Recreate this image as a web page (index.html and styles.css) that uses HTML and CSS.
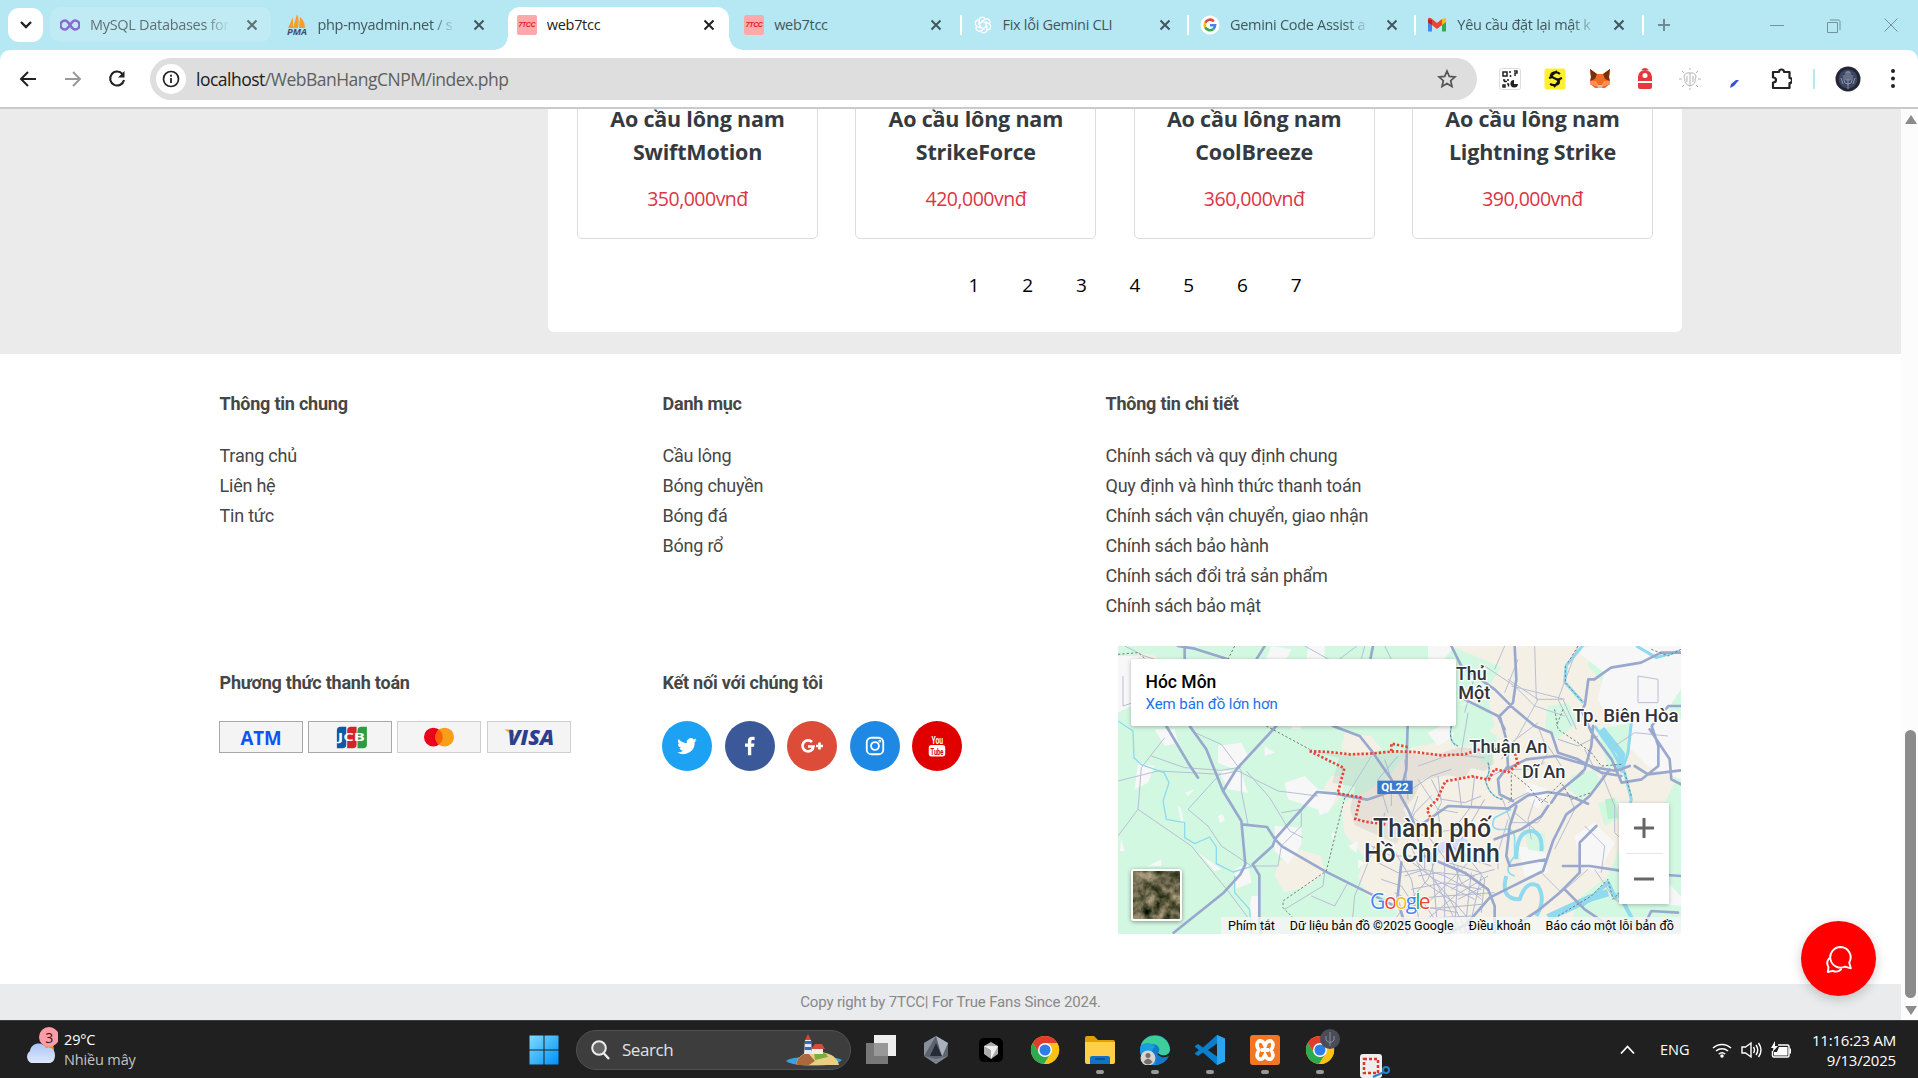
FILE: index.html
```html
<!DOCTYPE html>
<html lang="vi">
<head>
<meta charset="utf-8">
<title>web7tcc</title>
<link rel="stylesheet" href="styles.css">
</head>
<body>
<svg class="defs" width="0" height="0">
  <symbol id="x" viewBox="0 0 12 12"><path d="M1.5 1.5l9 9M10.5 1.5l-9 9" fill="none" stroke="currentColor" stroke-width="2"/></symbol>
  <symbol id="chrome" viewBox="0 0 32 32"><circle cx="16" cy="16" r="15" fill="#fbc116"/><path d="M3 8.5A15 15 0 0 1 29 8.5H16L10 19.500z" fill="#e33b2e"/><path d="M3 8.500A15 15 0 0 0 15 31l7-11.500-12 0z" fill="#2da94f"/><path d="M16 8.500H29A15 15 0 0 1 15 31l7.500-11.500z" fill="#fbc116"/><circle cx="16" cy="16" r="7.500" fill="#fff"/><circle cx="16" cy="16" r="5.900" fill="#2f7de9"/></symbol>
</svg>

<header class="browser">
  <div class="tabstrip">
    <button class="tab-search"><svg width="14" height="10" viewBox="0 0 14 10"><path d="M2 2l5 5 5-5" fill="none" stroke="#222" stroke-width="2.4"/></svg></button>
    <div class="tabs">
      <div class="tab hover"><span class="fav"><svg width="20" height="14" viewBox="0 0 20 14"><path d="M10 7C8 4 6.500 2.500 5 2.500a4.500 4.500 0 0 0 0 9C6.500 11.500 8 10 10 7s3.500-4.500 5-4.500a4.500 4.500 0 0 1 0 9C13.500 11.500 12 10 10 7z" fill="none" stroke="#7650c8" stroke-width="2.600"/></svg></span><span class="label fade">MySQL Databases for</span><svg class="close"><use href="#x"/></svg></div>
      <div class="tab"><span class="fav"><svg width="22" height="22" viewBox="0 0 22 22"><path d="M7 3v11H2zM11 0c2 4 2 10 1 14H7zM14 3c4 3 5 8 5 11h-6z" fill="#f89c2e"/><text x="1" y="21" font-size="8" font-weight="700" font-style="italic" textLength="20" lengthAdjust="spacingAndGlyphs" fill="#4a4a7c">PMA</text></svg></span><span class="label fade">php-myadmin.net / s</span><svg class="close"><use href="#x"/></svg></div>
      <div class="tab active"><span class="fav tcc">7TCC</span><span class="label">web7tcc</span><svg class="close"><use href="#x"/></svg></div>
      <div class="tab"><span class="fav tcc">7TCC</span><span class="label">web7tcc</span><svg class="close"><use href="#x"/></svg></div>
      <div class="tab sep"><span class="fav"><svg width="18" height="18" viewBox="0 0 18 18" fill="none" stroke="#fff" stroke-width="1.300"><g id="petal"><path d="M9 5.500L5 7.800V4.500a3.300 3.300 0 0 1 6-2"/></g><use href="#petal" transform="rotate(60 9 9)"/><use href="#petal" transform="rotate(120 9 9)"/><use href="#petal" transform="rotate(180 9 9)"/><use href="#petal" transform="rotate(240 9 9)"/><use href="#petal" transform="rotate(300 9 9)"/></svg></span><span class="label">Fix lỗi Gemini CLI</span><svg class="close"><use href="#x"/></svg></div>
      <div class="tab sep"><span class="fav"><svg width="20" height="20" viewBox="0 0 20 20"><circle cx="10" cy="10" r="9.500" fill="#fff"/><g fill="none" stroke-width="2.600"><path d="M13.800 6.300A5.200 5.200 0 0 0 5.300 7.700" stroke="#ea4335"/><path d="M5.300 7.700a5.200 5.200 0 0 0 0 4.700" stroke="#fbbc05"/><path d="M5.300 12.400a5.200 5.200 0 0 0 8 1.600" stroke="#34a853"/><path d="M13.300 14a5.200 5.200 0 0 0 1.800-3.700H10" stroke="#4285f4"/></g></svg></span><span class="label fade">Gemini Code Assist a</span><svg class="close"><use href="#x"/></svg></div>
      <div class="tab sep"><span class="fav"><svg width="20" height="16" viewBox="0 0 20 16"><path d="M1 3v11.500h4V6z" fill="#4285f4"/><path d="M19 3v11.500h-4V6z" fill="#34a853"/><path d="M15 2l4-1v4l-4 3z" fill="#fbbc04"/><path d="M1 5V2.500C1 .5 3 .5 4.500 1.500L10 6l5-4v6l-5 4z" fill="#ea4335"/><path d="M1 2.500v3L5 8V3z" fill="#c5221f"/></svg></span><span class="label fade">Yêu cầu đặt lại mật k</span><svg class="close"><use href="#x"/></svg></div>
      <div class="newtab sep"><svg width="14" height="14" viewBox="0 0 14 14"><path d="M7 1v12M1 7h12" stroke="#6f8b94" stroke-width="2"/></svg></div>
    </div>
    <div class="winctl">
      <svg width="14" height="16" viewBox="0 0 14 16"><path d="M0 7.500h14" stroke="#74929b" stroke-width="1"/></svg>
      <svg width="14" height="16" viewBox="0 0 14 16"><path d="M.5 4.500h10v10h-10zM3 2h8.500a1.500 1.500 0 0 1 1.500 1.500V12" fill="none" stroke="#74929b"/></svg>
      <svg width="14" height="14" viewBox="0 0 14 14"><path d="M.5.5l13 13M13.500.5l-13 13" stroke="#74929b"/></svg>
    </div>
  </div>
  <div class="toolbar">
    <div class="nav">
      <svg width="20" height="20" viewBox="0 0 20 20"><path d="M18 10H3M10 3l-7 7 7 7" fill="none" stroke="#222" stroke-width="2"/></svg>
      <svg width="20" height="20" viewBox="0 0 20 20"><path d="M2 10h15M10 3l7 7-7 7" fill="none" stroke="#9a9a9a" stroke-width="2"/></svg>
      <svg width="20" height="20" viewBox="0 0 20 20"><path d="M15.500 5A7 7 0 1 0 17 11" fill="none" stroke="#222" stroke-width="2.100"/><path d="M17.500 2v6.500H11z" fill="#222"/></svg>
    </div>
    <div class="omnibox">
      <span class="info"><svg width="18" height="18" viewBox="0 0 18 18"><circle cx="9" cy="9" r="7.500" fill="none" stroke="#222" stroke-width="1.700"/><path d="M9 8v5M9 4.800v2" stroke="#222" stroke-width="1.800"/></svg></span>
      <span class="url"><b>localhost</b>/WebBanHangCNPM/index.php</span>
      <svg width="20" height="20" viewBox="0 0 20 20"><path d="M10 2l2.300 5.400 5.700.5-4.300 3.800 1.300 5.700-5-3-5 3 1.300-5.700L2 7.900l5.700-.5z" fill="none" stroke="#555" stroke-width="1.700"/></svg>
    </div>
    <div class="exts">
      <svg viewBox="0 0 22 22"><rect x=".5" y=".5" width="21" height="21" rx="2" fill="#fff" stroke="#ddd"/><path d="M4 4h4v4H4zM11 3v2M15 3h3v2h-2v3M11.500 7v2M4 12h1.500v1.500H8M9 11v2M4 17h2v2H4zM8 16h1.500v2.500" fill="none" stroke="#222" stroke-width="1.500"/><path d="M15 12a3.800 3.800 0 1 0 4 4h-4z" fill="#222"/></svg>
      <svg viewBox="0 0 22 22"><rect x=".5" y=".5" width="21" height="21" rx="2.500" fill="#ffef2e"/><path d="M16 6c-3-3-8-2-9 1 0 4 8 3 8 7 0 3-5 4-9 2M13 3L7 8l8 5-5 6M5 10l4-1M13 12l5-2" fill="none" stroke="#111" stroke-width="2"/></svg>
      <svg viewBox="0 0 22 22"><path d="M1 1l7 5h6l7-5-1 9 1 6-5 4H6l-5-4 1-6z" fill="#ef6c23"/><path d="M1 1l7 5-2 5-5 2 1-4zM21 1l-7 5 2 5 5 2-1-4z" fill="#7c2d0c"/><path d="M1 13l6 0 3 5H6l-5-2zM21 13l-6 0-3 5h4l5-2z" fill="#ff8d5d"/><path d="M8 17h6l-1 3H9z" fill="#c9c1bb"/></svg>
      <svg viewBox="0 0 22 22"><path d="M4 13V9a7 7 0 0 1 14 0v4zM4 15h14v4q0 2-2 2H6q-2 0-2-2zM7 2q4-4 8 0z" fill="#e8383d"/><circle cx="11" cy="7.500" r="2.500" fill="#fff"/></svg>
      <svg viewBox="0 0 22 22" fill="none" stroke="#b3b3b3"><path d="M11 5v13M11 5C5 4 4 9 6 11c-1 4 2 6 5 7M11 5c6-1 7 4 5 6 1 4-2 6-5 7M8 8v6M14 8v6M11 0v2M11 20v2M0 11h3M19 11h3M3 3l2 2M17 17l2 2M19 3l-2 2M3 19l2-2"/></svg>
      <svg viewBox="0 0 22 22"><path d="M6 20l1-4 5-4h3l-5 6z" fill="#3556cf"/></svg>
      <svg viewBox="0 0 22 22"><path d="M3 4h6a2.500 2.500 0 0 1 5 0H19.500v6a2.500 2.500 0 0 1 0 5v5H3v-5.500c4 0 4-5 0-5z" fill="none" stroke="#222" stroke-width="2.200" stroke-linejoin="round"/></svg>
    </div>
    <i class="bar"></i>
    <svg class="avatar" viewBox="0 0 26 26"><circle cx="13" cy="13" r="12.500" fill="#232633"/><circle cx="13" cy="13" r="9.500" fill="#3c4763"/><path d="M13 5v18M9 9v5a4 4 0 0 0 8 0V9M11 6h4v8h-4zM6 12l2 6M20 12l-2 6" fill="none" stroke="#8e97ad"/></svg>
    <svg class="dots" width="6" height="22" viewBox="0 0 6 22"><circle cx="3" cy="3" r="2"/><circle cx="3" cy="10.500" r="2"/><circle cx="3" cy="18" r="2"/></svg>
  </div>
</header>

<div class="viewport">
  <main class="page">
    <section class="shop">
      <div class="panel">
        <div class="products">
          <article class="product"><h3>Ao cầu lông nam SwiftMotion</h3><p>350,000vnđ</p></article>
          <article class="product"><h3>Ao cầu lông nam StrikeForce</h3><p>420,000vnđ</p></article>
          <article class="product"><h3>Ao cầu lông nam CoolBreeze</h3><p>360,000vnđ</p></article>
          <article class="product"><h3>Ao cầu lông nam Lightning&nbsp;Strike</h3><p>390,000vnđ</p></article>
        </div>
        <nav class="pager"><a>1</a><a>2</a><a>3</a><a>4</a><a>5</a><a>6</a><a>7</a></nav>
      </div>
    </section>

    <footer class="footer">
      <div class="col"><h4>Thông tin chung</h4><ul><li>Trang chủ</li><li>Liên hệ</li><li>Tin tức</li></ul></div>
      <div class="col"><h4>Danh mục</h4><ul><li>Cầu lông</li><li>Bóng chuyền</li><li>Bóng đá</li><li>Bóng rổ</li></ul></div>
      <div class="col"><h4>Thông tin chi tiết</h4><ul><li>Chính sách và quy định chung</li><li>Quy định và hình thức thanh toán</li><li>Chính sách vận chuyển, giao nhận</li><li>Chính sách bảo hành</li><li>Chính sách đổi trả sản phẩm</li><li>Chính sách bảo mật</li></ul></div>

      <div class="col lower"><h4>Phương thức thanh toán</h4>
        <div class="pays">
          <svg class="dark" viewBox="0 0 84 32"><text x="20" y="24" font-size="21" font-weight="700" textLength="44" lengthAdjust="spacingAndGlyphs" fill="#0a56f5">ATM</text></svg>
          <svg class="dark" viewBox="0 0 84 32"><path d="M32 5h6v19q0 4-4 4h-6V9q0-4 4-4z" fill="#0b5aa5"/><path d="M43 5h6v19q0 4-4 4h-6V9q0-4 4-4z" fill="#d5232e"/><path d="M54 5h6v19q0 4-4 4h-6V9q0-4 4-4z" fill="#2c9c3f"/><text x="29" y="20.500" font-size="11" font-weight="700" textLength="29" lengthAdjust="spacingAndGlyphs" fill="#fff">JCB</text></svg>
          <svg viewBox="0 0 84 32"><circle cx="36" cy="16" r="10" fill="#eb001b"/><circle cx="48" cy="16" r="10" fill="#f79e1b"/><path d="M42 8a10 10 0 0 1 0 16 10 10 0 0 1 0-16z" fill="#ff5f00"/></svg>
          <svg viewBox="0 0 84 32"><path d="M16 8h8l3 8z" fill="#f7a823"/><text x="19" y="24" font-size="22" font-weight="800" font-style="italic" textLength="50" lengthAdjust="spacingAndGlyphs" fill="#2a3f8f">VISA</text></svg>
        </div>
      </div>
      <div class="col lower"><h4>Kết nối với chúng tôi</h4>
        <div class="socials">
          <a class="tw"><svg viewBox="0 0 24 24"><path fill="#fff" d="M23.600 4.900a9.600 9.600 0 0 1-2.700.8 4.800 4.800 0 0 0 2.100-2.700 9.600 9.600 0 0 1-3 1.200 4.800 4.800 0 0 0-8.200 4.400A13.600 13.600 0 0 1 1.900 3.600a4.800 4.800 0 0 0 1.500 6.400 4.700 4.700 0 0 1-2.200-.6 4.800 4.800 0 0 0 3.800 4.800 4.800 4.800 0 0 1-2.100.1 4.800 4.800 0 0 0 4.400 3.300A9.600 9.600 0 0 1 .2 19.500 13.600 13.600 0 0 0 21.200 7.400a9.700 9.700 0 0 0 2.400-2.500z"/></svg></a>
          <a class="fb"><svg viewBox="0 0 24 24"><path fill="#fff" d="M9.500 23V13H6V9h3.500V6c0-3.500 2-5 5-5 1.500 0 2.500.1 3 .2v3.500h-2c-1.600 0-2 .8-2 2V9h3.800l-.5 4h-3.300v10z"/></svg></a>
          <a class="gp"><svg viewBox="0 0 24 24" fill="none" stroke="#fff" stroke-width="2.700"><path d="M12 8A5.500 5.500 0 1 0 13.500 12.500H8M19.500 8.500v7M16 12h7"/></svg></a>
          <a class="ig"><svg viewBox="0 0 24 24" fill="none" stroke="#fff" stroke-width="2"><rect x="3" y="3" width="18" height="18" rx="5"/><circle cx="12" cy="12" r="4.300"/><circle cx="17.200" cy="6.800" r=".5"/></svg></a>
          <a class="yt"><svg viewBox="0 0 24 24"><rect x="3" y="11" width="18" height="12.500" rx="3" fill="#fff"/><text x="6" y="9.500" font-size="11" textLength="12.500" lengthAdjust="spacingAndGlyphs" font-weight="700" fill="#fff">You</text><text x="5" y="21.300" font-size="10.500" textLength="14" lengthAdjust="spacingAndGlyphs" font-weight="700" fill="#e00000">Tube</text></svg></a>
        </div>
      </div>
      <div class="col mapcol">
        <div class="map">
          <svg class="tiles" viewBox="0 0 1689 864">
            <rect width="1689" height="864" fill="#d3f8e2"/>
            <g fill="#f5f0e5">
              <path d="M1000 0h420l-10 60 80 90 60 120 100 60 20 80-60 120-100 60-40 100-90 70-40 140-40 24H800l-20-80 60-40-40-60-50 10-30-60 20-60-60-70-10-90 80-40 70-50 60-80 110-20 60-50-20-60 60-20 60-90z"/>
              <path d="M640 390h40l-10 60-40 50-20-60zM480 650l60-40 70 20 10 50-50 40-70 20-30-50zM680 260l80 10 30 40-60 30-60-30zM60 20l60 10-20 30-50-10z"/>
            </g>
            <g fill="#f8f7f8">
              <path d="M1430 0h259v130l-40 60 40 30v180l-100-40-90-90-60-110 20-80-90-70zM0 30h60l-20 150-40 20zM1370 570l60-40 60 60-50 90-50-20zM1200 600l80 10 10 70-70 10zM1560 720l70-30 59 60v30l-90-10zM930 0h80l-40 50-40-10z"/>
              <path d="M300 300l70-10 20 40-40 40-50-20zM300 370l70 10 20 60-60-10zM110 250l60 0 10 40-40 10zM60 350l50 10-20 50-40 20zM500 410l60-20 40 40 60 10-30 60-60-20-60-20zM470 540l80 5 0 50-40 60-40-40 0-50zM350 670l40-20 10 60-50 20zM400 750l25 0-10 90-20-40zM300 510l15-5 5 20-15 5zM10 580l10 35-15 0zM440 300l30 20-30 10zM600 490l25 10-20 8zM180 480l10 50 8 5-10-50zM440 50l60 0 20-40-60-10zM1230 410l60 20-30 60-40-40zM930 260l60-30 20 40-50 30zM720 640l20 10-20 20zM640 560l15 5-12 15z"/>
              <path d="M90 660l40-20 0 20zM240 620l70 50-20 5zM560 100l60-10 0-90-50 0zM200 440l30-10-20 20zM530 190l20 60-30 0zM690 600l30-15-5 35z"/>
            </g>
            <g fill="#d3f8e2"><path d="M1290 180l60-10 30 60-60 50-40-40zM1360 390l70-20 20 50-60 40-40-30zM1020 180l90-20 20 80-60 60-70 0zM1440 250l100-20-10 100-60 40zM1220 560l60 0 0 60-50-10zM1100 250l40 20-20 90-40-20zM1440 470l60-10 0 60-40 20z"/><path fill="#baf0d0" d="M1460 460l30-5 10 60-30 5z"/></g>

            <g fill="none" stroke="#8fdaee" stroke-linejoin="round">
              <path stroke-width="4" d="M0 225l45 30 3 80 20 20 70 25 15 30-18 55 10 55 55 10 0 45 30 18 45-20 20 30 0 50 50 25 60-18M350 690l0 50 45 50 5 74"/>
              <path stroke-width="9" d="M1396 170l-56-62 5-50 50-60M1430 240l50 70 40 70 20 80-10 40M1540 230l-10 90-20 60M1555 0l60 35 70-20"/>
              <path stroke-width="5" d="M1000 240q-10 50 20 60M1110 350q10 30-8 50 10 50 50 60M1180 490l-50 25q-20 40 30 35 30-5 30 30l0 50q-40 50 0 60"/>
              <path stroke-width="12" d="M1195 640q0-90 50-85 30 10 25 60M1165 690q-20 70 40 70 20-60 55-40 25 40-5 90"/>
              <path stroke-width="12" d="M1390 780l80-70 25 50M1500 740l60 110"/>
              <path stroke-width="22" d="M1290 815l130-60 50-15M1450 250l60 75-5 50"/>
            </g>
            <path fill="#d8defa" d="M960 590l80-15 20 20-50 25-50 0z"/>
            <path fill="#999" fill-opacity=".17" d="M575 315l104 10 120-10h20l80 10 70-3 55-18 35 2 60 10 10 35-30 25-40-10-18 32-50-10-80 15-25 55-30 30 15 35-35 70-125-55-15-50 15-65-68-12 20-75z"/>

            <g fill="none" stroke="#b8bfd6" stroke-width="3">
              <path d="M140 275l-70 90-10 125-60 80M60 490l160 110 110 135 60 80M0 405l120-30 190 10 50-10 120 60 120 15M100 330l100 35 110 8 60-10M220 255l90 40 60 80 0 60 20 100M385 375l70 80 60 100 40 20M210 490l100-110M210 490l60 50 40 60 90 60 80 0 10-60 60-60 0-50-60 10M15 90l0 90 60-20M580 750l70 30 40-70M620 680l-5 40-115 70M700 860l10-110 60-150M760 330l-80 130M20 0l60 30 60 20M560 0l90 50 80-60M740 0l-10 40M800 0l20 40"/>
              <path d="M900 360l100-35 100 10M900 450l-20 60 60 50 80-10M960 390l10 80-30 60M900 400l60 90 60 10M1250 0l5 160 80 0 40 90M1100 60l90 60 60 60 90 30M1050 200l-20 120M1120 300l60-10 80-60M1170 100l90 60-60 110-50 70M1180 120l160 40M1100 400l60-30 80 0 40-20M1150 450l30 80 80 0 60-90 80-60M1170 520l-30 100 0 50M1250 460l-20 60 10 60M1350 440l20 50-60 120M1450 380l40 100 0 80M1380 0l-60 160 40 80M1560 90l60 10 0 70-60 0zM1490 300l60-40 100 10M1430 670l60 90 40 20M1260 240l30 80-50 80M1160 0l-30 70M1000 0l20 40M1200 40l-40 100M1070 90l-30 110M1400 540l60 60-10 80M1490 560l60 60M1270 680l60 60 80-70"/>
            </g>
            <g fill="none" stroke="#b0b8d3" stroke-width="3">
              <path d="M820 600l60 100 30 160M880 600l40 110 90 60 80 94M960 620l-30 80-70 80-60 84M1000 640l30 70 60 50M1060 640l-70 70-60 60-90 20M900 690l60-10 100 10 70-20M880 730l100-20 110 20M860 760l120-10 150-10M850 790l130-5 110-10M840 820l120-5 100-5M940 620l20 240M980 640l0 220M1020 660l-10 200M1060 680l-20 180M1090 690l-40 174M900 650l90 100 60 110M1110 690l-100 60-130 110M870 640l80 60 120 60M1040 620l60 80-10 100M760 600l60 30 60 0M780 650l60 30 70-10M790 700l60 20 40 60M890 560l30 60 0 50M930 570l60 80 100 30M1000 600l60 40 60 20M860 690l60-20 60 20 110 60M950 700l80 160M910 760l60 90M1000 730l70-40M1020 760l80-40M830 740l80 40 110 20"/>
              <path d="M800 340l20 60 0 80M840 330l-60 70 30 100M860 340l10 120M880 430l60-40 60-20M940 450l-50 50-20 50 50 20M800 500l-10 70M940 400l30 60 70 10 50-20M1020 400l10 80M1070 390l-10 90-60 80M960 500l10 60M1100 460l-70 120M1190 500l60 50M1290 470l-60-30-60 30M1320 280l60 20 60-30M1290 300l40 60M1400 310l30 60"/>
            </g>
            <g fill="none" stroke="#99a8cd" stroke-width="8" stroke-linejoin="round" stroke-linecap="round">
              <path d="M200 0v40M180 0l50 8 100 32M440 0l-25 40M765 0l-10 50M145 240l65 110 30 45M215 240l50 70 50 125 55 90 12 130-15 30-50 55-150 120M475 240l-120 130-38 62M372 535l75 8 25 38 20 20 130 75 200 100M472 578l-8 22-60 55 20 32 0 150 5 30M472 578l125-140 55 5 95 18 60-20M645 240l80 30 40 50 55 80 50 90 30 70M870 200l-5 170-10 40M890 550l100-70 180 8 60-40 60-10 60 10 60 25"/>
              <path d="M1190 0l5 100-10 70-40 40 20 70 5 80-30 40 5 45 40 20M1000 0l30 60 100 70 60 60 60 50 50 20 20 60 60 20 70 40 60 10M1040 160l100 50 20 40M1165 370l60-30 90-10 50 15 70 20 60 10 40-15M1689 20l-60 0-60 30-90 15-50 35-18 0-10 75-10 20 30 65 60 80 30 70 60-10 50-40 0-60-20-60 50-60 39 0M1550 360l40 25 99-12M1595 250l60 90 5 60 29 15M1425 240l-5 60-20 70-20 20-60 50-20 30M1475 370l-60 80-30 25-40 30-40 80-30 90-100 50-60 30-70 80-60 30-100 30M1290 480l-20 30-60 40-80 30M1195 480l-20 60-10 90 10 30 110-20M1335 660l80 0 130 20 144 10M1435 540l-50 50 0 90-60 60-60 50-90 60M920 630l120 50 70 50 20 50 0 80M850 650l-12 110 30 100M1340 730l60 60 110 74M1680 800l-80-5-30 60"/>
            </g>
            <g fill="none" stroke="#777d80" stroke-width="3" stroke-dasharray="7 6">
              <path d="M350 0l-20 40M0 25l60-5 30 25M445 240l130 70M680 455l-55 220-130 90 0 20 60 60M1310 190l10 60 60 40 40 30 30 40 60-5M1180 460l0-80 50 40 40 50 60-60 30 50 60-20M1335 190l-20 50M1342 60l0 50 54 60M1380 0l-30 50M1600 10l50 20 39-20M1110 350q10 30-8 50 10 50 50 60M1000 240q-10 50 20 60M1320 810l100-60 50-50 15 60 40-40M1520 380l20 70"/>
            </g>
            <path fill="none" stroke="#ea4335" stroke-width="8" stroke-dasharray="7 6" d="M575 315l60 3 60 7 60-2 75-7 60 2 80 10 70-3 55-18 35 2 60 10 10 35-30 25-40-10-18 32-50-10-80 15-25 55-30 30 15 35M575 315l104 52-20 75 68 12-15 65 30 8 60 8M820 315l0-22 50 10"/>
            <g><rect x="778" y="404" width="106" height="40" fill="#3b78cb"/><text x="790" y="435" font-size="32" font-weight="700" textLength="82" lengthAdjust="spacingAndGlyphs" fill="#fff">QL22</text></g>
            <g class="places">
              <text x="1014" y="102" font-size="54" textLength="92" lengthAdjust="spacingAndGlyphs">Thủ</text><text x="1021" y="159" font-size="54" textLength="96" lengthAdjust="spacingAndGlyphs">Một</text>
              <text x="1364" y="229" font-size="54" textLength="318" lengthAdjust="spacingAndGlyphs">Tp. Biên Hòa</text>
              <text x="1054" y="320" font-size="54" textLength="234" lengthAdjust="spacingAndGlyphs">Thuận An</text>
              <text x="1212" y="397" font-size="54" textLength="130" lengthAdjust="spacingAndGlyphs">Dĩ An</text>
              <text x="765" y="572" font-size="76" textLength="354" lengthAdjust="spacingAndGlyphs">Thành phố</text>
              <text x="738" y="647" font-size="76" textLength="407" lengthAdjust="spacingAndGlyphs">Hồ Chí Minh</text>
            </g>
          </svg>
          <div class="place"><strong>Hóc Môn</strong><span>Xem bản đồ lớn hơn</span></div>
          <svg class="sat" viewBox="0 0 48 48"><defs><filter id="terrain" x="0" y="0" width="100%" height="100%" color-interpolation-filters="sRGB"><feTurbulence type="fractalNoise" baseFrequency=".09" numOctaves="4" seed="8"/><feColorMatrix values=".9 .5 0 0 -.3  .75 .4 0 0 -.19  .7 .4 0 0 -.27  0 0 0 0 1"/></filter></defs><rect width="48" height="48" filter="url(#terrain)"/></svg>
          <div class="google"><i>G</i><i>o</i><i>o</i><i>g</i><i>l</i><i>e</i></div>
          <div class="zoom"><svg width="20" height="20" viewBox="0 0 20 20"><path d="M10 0v20M0 10h20" stroke="#666" stroke-width="3"/></svg><hr><svg width="20" height="20" viewBox="0 0 20 20"><path d="M0 10h20" stroke="#666" stroke-width="3"/></svg></div>
          <div class="attrib"><span>Phím tắt</span><span>Dữ liệu bản đồ ©2025 Google</span><span>Điều khoản</span><span>Báo cáo một lỗi bản đồ</span></div>
        </div>
      </div>
    </footer>
    <div class="copy">Copy right by 7TCC| For True Fans Since 2024.</div>
    <button class="chat"><svg width="28" height="28" viewBox="0 0 28 28" fill="none" stroke="#fff" stroke-width="1.900" stroke-linejoin="round" stroke-linecap="round"><path d="M15.500 2A10.300 10.300 0 1 0 20 21.600L25.800 23.300 24.200 17.500A10.300 10.300 0 0 0 15.500 2zM4 13.500C2 16 1.800 19.500 3.500 22.300L2.800 27l4.900-1.200c3 1.400 6 .8 8.300-1.300"/></svg></button>
  </main>
  <div class="scrollbar"><i class="up"></i><i class="thumb"></i><i class="down"></i></div>
</div>

<div class="taskbar">
  <div class="weather">
    <svg width="34" height="46" viewBox="0 0 34 46"><circle cx="24" cy="22" r="6" fill="#f28a1b"/><defs><linearGradient id="cl" x2="0" y2="1"><stop stop-color="#a9c5f5"/><stop offset="1" stop-color="#dde9fb"/></linearGradient></defs><path d="M7 36a7 7 0 0 1-1-12C7 15 19 14 22 21c5-2 9 2 9 7 0 6-3 8-6 8z" fill="url(#cl)"/><circle cx="25" cy="10" r="10" fill="#fd9ba6"/><text x="21.300" y="15.500" font-size="14" fill="#222">3</text></svg>
    <div><span>29°C</span><span class="dim">Nhiều mây</span></div>
  </div>
  <div class="apps">
    <svg class="ico" viewBox="0 0 30 30"><defs><linearGradient id="w" x2="1" y2="1"><stop stop-color="#7fdcff"/><stop offset="1" stop-color="#0090f5"/></linearGradient></defs><path d="M.5.5H14.500V14.500H.5zM15.500.5H29.500V14.500H15.500zM.5 15.500H14.500V29.500H.5zM15.500 15.500H29.500V29.500H15.500z" fill="url(#w)"/></svg>
    <div class="search">
      <svg width="19" height="20" viewBox="0 0 19 20"><circle cx="8" cy="8" r="6.800" fill="#666" stroke="#eee" stroke-width="2"/><path d="M13 13.500l5 5.500" stroke="#eee" stroke-width="2.400"/></svg>
      <span>Search</span>
      <svg width="56" height="32" viewBox="0 0 56 32"><path d="M0 27c8-6 46-6 56-1-5 7-48 8-56 1z" fill="#3aa0dd"/><path d="M10 31c0-7 8-13 16-14l14 2c8 2 12 7 13 12z" fill="#e9cf83"/><path d="M28 19c7-3 12-1 14 4l-13 3z" fill="#7cae3b"/><path d="M10 31c1-6 5-11 12-12l7 8-6 4z" fill="#a9683e"/><path d="M19 6h6l1 14h-8z" fill="#dfe9f7"/><path d="M19 7h6v3h-6zM18.600 13h6.800v3h-6.800z" fill="#3469c6"/><path d="M19 6l3-6 3 6z" fill="#d9462f"/><path d="M26 14h11v6H26z" fill="#f3ede4"/><path d="M25 15l4-5h7l3 5z" fill="#d24b3b"/></svg>
    </div>
    <svg class="ico" viewBox="0 0 30 30"><path d="M8 0h22v21H8z" fill="#eee"/><path d="M0 8h22v21H0z" fill="#888" fill-opacity=".85"/></svg>
    <svg class="ico" viewBox="0 0 30 30"><path d="M15 1l12 7v13l-12 8-12-8V8z" fill="#5b636e"/><path d="M15 1l12 7-6 14z" fill="#aab1bd"/><path d="M15 1L3 8v13z" fill="#878f9b"/><path d="M15 8l6 13H9z" fill="#272b33"/><path d="M3 21l12 8 12-8-12 3z" fill="#7b838f"/></svg>
    <svg class="ico" viewBox="0 0 30 30"><rect x="3" y="3" width="24" height="24" rx="5" fill="#000"/><path d="M15 7l7 4v8l-7 5-7-5v-8z" fill="#aaa"/><path d="M8 11h14l-7 13v-9z" fill="#eee"/></svg>
    <svg class="ico"><use href="#chrome"/></svg>
    <span class="app"><svg class="ico" viewBox="0 0 30 30"><path d="M0 3q0-2 2-2h7l4 4h15q2 0 2 2v10H0z" fill="#e0a100"/><path d="M0 7h30v20q0 2-2 2H2q-2 0-2-2z" fill="#ffcf48"/><path d="M5 29v-6q0-2 2-2h16q2 0 2 2v6z" fill="#1272c4"/><path d="M10 24h10" stroke="#0a4a8a" stroke-width="1.500"/></svg></span>
    <span class="app"><svg class="ico" viewBox="0 0 30 30"><circle cx="15" cy="15" r="15" fill="#1479c9"/><path d="M1 10C5-3 28-3 30 14c0 7-9 8-12 4 3-3 1-9-6-9-5 0-9 2-11 1z" fill="#3bcf9b"/><path d="M0 14c0-7 12-8 15-2-4 1-5 12 4 17C8 33 0 25 0 14z" fill="#1b9de2"/><path d="M18 18c3 4 11 3 12-2l0 14H19q-4-6-1-12z" fill="#202020"/><path d="M16 17c3 6 9 6 13 4-3 6-8 9-14 9z" fill="#1479c9"/><circle cx="8" cy="23" r="7.500" fill="#d8d4d0"/><circle cx="8" cy="20.500" r="2.500" fill="#76706c"/><path d="M3.500 27q4.500-7 9 0-4.500 5-9 0z" fill="#76706c"/></svg></span>
    <span class="app"><svg class="ico" viewBox="0 0 30 30"><path d="M22 0l8 3.500v23L22 30 8 17.500 3 21l-3-2v-1l4-3-4-3v-1l3-2 5 3.500z" fill="#0b7fcb"/><path d="M22 0l8 3.500v23L22 30z" fill="#2aa5f2"/><path d="M22 8.500v13L13 15z" fill="#202020"/></svg></span>
    <span class="app"><svg class="ico" viewBox="0 0 30 30"><rect width="30" height="30" rx="3" fill="#f37623"/><path d="M9 6q4-1 6 5 2-6 6-5 4 3 0 9 4 6 0 9-4 1-6-4-2 5-6 4-4-3 0-9-4-6 0-9z" fill="none" stroke="#fff" stroke-width="3.600"/><path d="M11 15h8" stroke="#fff" stroke-width="4"/></svg></span>
    <span class="app"><svg class="ico"><use href="#chrome"/></svg><svg class="mini" viewBox="0 0 20 20"><circle cx="10" cy="10" r="10" fill="#4a4c57"/><path d="M10 3v14M6 7v4q4 5 8 0V7" fill="none" stroke="#8b8f9c"/></svg></span>
    <svg class="ico snip" viewBox="0 0 30 26"><rect width="22" height="24" rx="3" fill="#eee"/><path d="M4 5h14v14H4z" fill="none" stroke="#d9372a" stroke-width="2.500" stroke-dasharray="3 2"/><circle cx="26" cy="16" r="3" fill="none" stroke="#1d86c8" stroke-width="2"/><path d="M13 23l11-5" stroke="#1d86c8" stroke-width="2"/></svg>
  </div>
  <div class="tray">
    <svg width="15" height="10" viewBox="0 0 15 10"><path d="M1 8.500l6.500-7 6.500 7" fill="none" stroke="#fff" stroke-width="1.800"/></svg>
    <span class="lang">ENG</span>
    <div class="status">
      <svg width="20" height="16" viewBox="0 0 20 16" fill="none" stroke="#fff" stroke-width="1.500"><path d="M1 6a13 13 0 0 1 18 0M4 9a9 9 0 0 1 12 0M6.800 12a5 5 0 0 1 6.400 0"/><circle cx="10" cy="14" r="1" fill="#fff"/></svg>
      <svg width="21" height="18" viewBox="0 0 21 18" fill="none" stroke="#fff" stroke-width="1.400"><path d="M1 6h3.500L10 2v14l-5.500-4H1zM12.500 6q2 3 0 6M15 4q3.500 5 0 10M17.500 2q5 7 0 14"/></svg>
      <svg width="20" height="18" viewBox="0 0 20 18"><path d="M7 4h9.500Q18 4 18 6v8.500q0 1.500-1.500 1.500H3q-1.500 0-1.500-1.500V10" fill="none" stroke="#fff" stroke-width="1.500"/><path d="M8 6h8.500v8.500H3V11h3zM18.500 7.500H20v5h-1.500zM4 0L0 7h2.500L1.500 11 7 5H4z" fill="#fff"/></svg>
    </div>
    <div class="clock"><span>11:16:23 AM</span><span>9/13/2025</span></div>
  </div>
</div>
</body>
</html>
```
FILE: styles.css
```css
* { box-sizing: border-box; }
body { margin: 0; width: 1918px; height: 1078px; overflow: hidden; display: flex; flex-direction: column; font-family: "Open Sans", "Noto Sans", sans-serif; background: #fff; }
svg { display: block; flex: none; }
button { border: 0; padding: 0; display: flex; align-items: center; justify-content: center; }
.defs { position: absolute; }

.browser { flex: none; height: 109px; border-bottom: 2px solid #cacaca; background: #b5e8f3; }
.tabstrip { height: 50px; display: flex; padding-left: 8px; }
.tab-search { width: 35px; height: 34px; margin-top: 8px; border-radius: 11px; background: #fff; }
.tabs { display: flex; padding-left: 7px; padding-top: 7px; flex: 1; }
.tab { width: 227.400px; height: 35px; padding-left: 9px; display: flex; align-items: center; color: #44565c; font-size: 14.500px; font-stretch: 95%; position: relative; }
.tab.sep { padding-left: 12px; }
.fav { width: 22px; height: 20px; margin-right: 9px; display: flex; align-items: center; justify-content: center; }
.tcc { width: 20px; margin: 0 10px 0 3px; background: #ffa9aa; border-radius: 2px; color: #e31b23; font: italic 700 7px "Liberation Sans", sans-serif; letter-spacing: -.4px; }
.label { width: 140px; overflow: hidden; white-space: nowrap; letter-spacing: -.3px; }
.fade { -webkit-mask-image: linear-gradient(90deg, #000 82%, transparent); mask-image: linear-gradient(90deg, #000 82%, transparent); }
.close { width: 12px; height: 12px; margin-left: 16px; }
.hover::after { content: ""; position: absolute; inset: 0 6.600px 0 0; border-radius: 10px; background: #fff; opacity: .15; }
.active { color: #222; z-index: 1; }
.active::before { content: ""; position: absolute; z-index: -1; left: 3px; width: 221px; top: 0; bottom: -8px; border-radius: 12px 12px 0 0; background: #fff; }
.active::after { content: ""; position: absolute; z-index: -1; left: -11px; width: 249px; height: 14px; bottom: -8px; background: radial-gradient(circle at 0 0, transparent 13.500px, #fff 14px) left / 14px 14px no-repeat, radial-gradient(circle at 100% 0, transparent 13.500px, #fff 14px) right / 14px 14px no-repeat; }
.sep::before { content: ""; position: absolute; left: 0; top: 8px; width: 2px; height: 20px; background: #fff; }
.newtab { position: relative; padding: 11px 15px; }
.winctl { display: flex; gap: 43px; padding: 18px 20px 0 0; height: 32px; }
.toolbar { height: 57px; background: #fff; border-radius: 10px 10px 0 0; display: flex; align-items: center; padding: 0 22px 0 18px; }
.nav { display: flex; gap: 24.500px; width: 132px; }
.omnibox { width: 1327px; height: 42px; border-radius: 21px; background: #dedede; display: flex; align-items: center; padding: 0 20px 0 6px; }
.info { width: 30px; height: 30px; border-radius: 50%; background: #fff; display: flex; align-items: center; justify-content: center; margin-right: 10px; }
.url { flex: 1; color: #5e5e5e; font-size: 17.500px; letter-spacing: -.5px; }
.url b { font-weight: 400; color: #202020; }
.exts { display: flex; gap: 23.100px; margin-left: 22px; }
.exts svg { width: 22px; height: 22px; }
.bar { width: 2px; height: 20px; background: #b5e8f3; margin-left: 21px; }
.avatar { width: 26px; height: 26px; margin-left: 20px; }
.dots { margin-left: 29px; fill: #222; }

.viewport { height: 911px; display: flex; flex: none; }
.page { width: 1901px; overflow: hidden; position: relative; }
.shop { height: 245px; background: #ebebeb; padding-left: 548px; }
.panel { width: 1134px; height: 223px; background: #fff; border-radius: 0 0 6px 6px; padding: 0 29px; }
.products { display: flex; justify-content: space-between; height: 130px; }
.product { width: 241px; margin-top: -14px; height: 144px; border: 1px solid #dcdcdc; border-radius: 5px; text-align: center; padding: 6px 30px 0; }
.product h3 { margin: 0; font-size: 21.500px; line-height: 33px; color: #343a40; letter-spacing: -.2px; }
.product p { margin: 16px 0 0; font-size: 19.500px; line-height: 30px; color: #dc3545; letter-spacing: -.5px; }
.pager { display: flex; justify-content: center; padding: 32px 0 0 40px; font-size: 19px; line-height: 28px; color: #000; }
.pager a { width: 53.700px; text-align: center; }

.footer { height: 630px; padding-left: 219px; display: grid; grid-template-columns: repeat(3, 443px); grid-template-rows: 292px 338px; font-family: Roboto, sans-serif; color: #464646; }
.col { padding-top: 36px; }
.col h4 { margin: 0; padding-left: .5px; font-size: 18px; line-height: 28px; letter-spacing: -.22px; font-weight: 700; }
.col ul { margin: 23px 0 0; padding: 0 0 0 .5px; list-style: none; font-size: 18px; line-height: 30px; letter-spacing: -.22px; white-space: nowrap; }
.lower { padding-top: 23px; }
.pays { display: flex; gap: 5.200px; margin-top: 24px; font-family: "Open Sans", sans-serif; }
.pays svg { width: 84px; height: 32px; background: #f4f4f4; border: 1px solid #cfcfcf; }
.pays .dark { border-color: #a8a8a8; }
.socials { display: flex; gap: 12.500px; margin-top: 24px; }
.socials a { width: 50px; height: 50px; border-radius: 50%; display: flex; align-items: center; justify-content: center; }
.socials svg { width: 20px; height: 20px; }
.tw { background: #1da1f2; }
.fb { background: #3b5998; }
.gp { background: #dd4b39; }
.socials .gp svg { width: 24px; height: 24px; }
.ig { background: #1e88e5; }
.yt { background: #e00000; }
.socials .ig svg, .socials .yt svg { width: 22px; height: 22px; }
.col.mapcol { padding: 0 0 0 13px; }
.map { width: 563px; height: 288px; position: relative; overflow: hidden; }
.tiles { width: 563px; height: 288px; }
.places text { font-weight: 500; fill: #30333a; stroke: #fff; stroke-width: 8px; paint-order: stroke; stroke-linejoin: round; }
.place { position: absolute; left: 13px; top: 13px; width: 325px; height: 67px; background: #fff; border-radius: 2px; box-shadow: 0 1px 4px #0004; padding: 12px 14.500px; display: flex; flex-direction: column; line-height: 22px; }
.place strong { font-weight: 500; font-size: 17.500px; color: #000; }
.place span { font-size: 15px; color: #1a73e8; letter-spacing: -.05px; }
.sat { position: absolute; left: 13px; top: 223px; width: 51px; height: 52px; border: 2px solid #fff; border-radius: 3px; box-shadow: 0 1px 4px #0006; }
.google { position: absolute; left: 252px; top: 242px; font: 500 21px/26px "Open Sans", sans-serif; letter-spacing: -1.900px; -webkit-text-stroke: 2px #fff; paint-order: stroke; }
.google i { font-style: normal; color: #4285f4; }
.google i:first-child { letter-spacing: -1px; }
.google i:nth-child(2), .google i:nth-child(6) { color: #ea4335; }
.google i:nth-child(3) { color: #fbbc04; }
.google i:nth-child(5) { color: #34a853; }
.zoom { position: absolute; left: 501px; top: 157px; width: 50px; height: 101px; background: #fff; box-shadow: 0 1px 4px #0004; display: flex; flex-direction: column; align-items: center; justify-content: space-between; padding: 15px 6px; }
.zoom hr { width: 37px; margin: 0; border: 0; border-top: 1px solid #e6e6e6; }
.attrib { position: absolute; right: 0; bottom: 0; height: 17px; width: 460px; background: #f5f5f5d0; display: flex; justify-content: space-between; padding: 0 7px; font-size: 12.500px; line-height: 17px; color: #000; white-space: nowrap; }
.copy { height: 36px; background: #eaebec; text-align: center; font: 15px/37px Roboto, sans-serif; letter-spacing: -.15px; color: #888; }
.chat { position: absolute; left: 1801px; top: 812px; width: 75px; height: 75px; border-radius: 50%; background: #f00; box-shadow: 0 3px 12px #0003; }
.scrollbar { width: 17px; background: #fcfcfc; display: flex; flex-direction: column; align-items: center; padding-left: 2px; }
.up, .down { border: 6px solid transparent; border-top: 0; border-bottom: 9px solid #8b8b8b; }
.up { margin-top: 6px; margin-bottom: 606px; }
.thumb { width: 11px; height: 268px; border-radius: 6px; background: #8b8b8b; }
.down { border-bottom: 0; border-top: 9px solid #8b8b8b; margin-top: 8px; }

.taskbar { height: 58px; background: #202020; border-top: 1px solid #3c3c3c; display: flex; color: #fff; font-size: 14.500px; }
.weather { width: 529px; padding: 6px 0 0 24px; display: flex; gap: 6px; line-height: 20px; letter-spacing: -.15px; }
.weather div { padding-top: 3px; display: flex; flex-direction: column; }
.dim { color: #c4c4c4; }
.apps { display: flex; align-items: center; gap: 24.900px; width: 1091px; }
.ico { width: 30px; height: 30px; }
.search { width: 275px; height: 40px; margin: 0 -10px 0 -8px; border-radius: 20px; background: #3d3d3d; border: 1px solid #515151; display: flex; align-items: center; padding: 0 8px 0 14px; }
.search span { flex: 1; margin-left: 12px; font-size: 17px; color: #e2e2e2; letter-spacing: -.4px; }
.app { position: relative; }
.app::after { content: ""; position: absolute; left: 11px; top: 35px; width: 8px; height: 4px; border-radius: 2px; background: #999; }
.mini { position: absolute; left: 15px; top: -6px; width: 20px; height: 20px; }
.snip { margin-top: 35px; }
.tray { display: flex; align-items: center; width: 276px; }
.lang { margin-left: 25px; }
.status { display: flex; gap: 9px; margin-left: 22px; align-items: center; }
.clock { flex: 1; display: flex; flex-direction: column; align-items: flex-end; line-height: 20px; font-size: 15px; letter-spacing: -.2px; white-space: nowrap; }
```
